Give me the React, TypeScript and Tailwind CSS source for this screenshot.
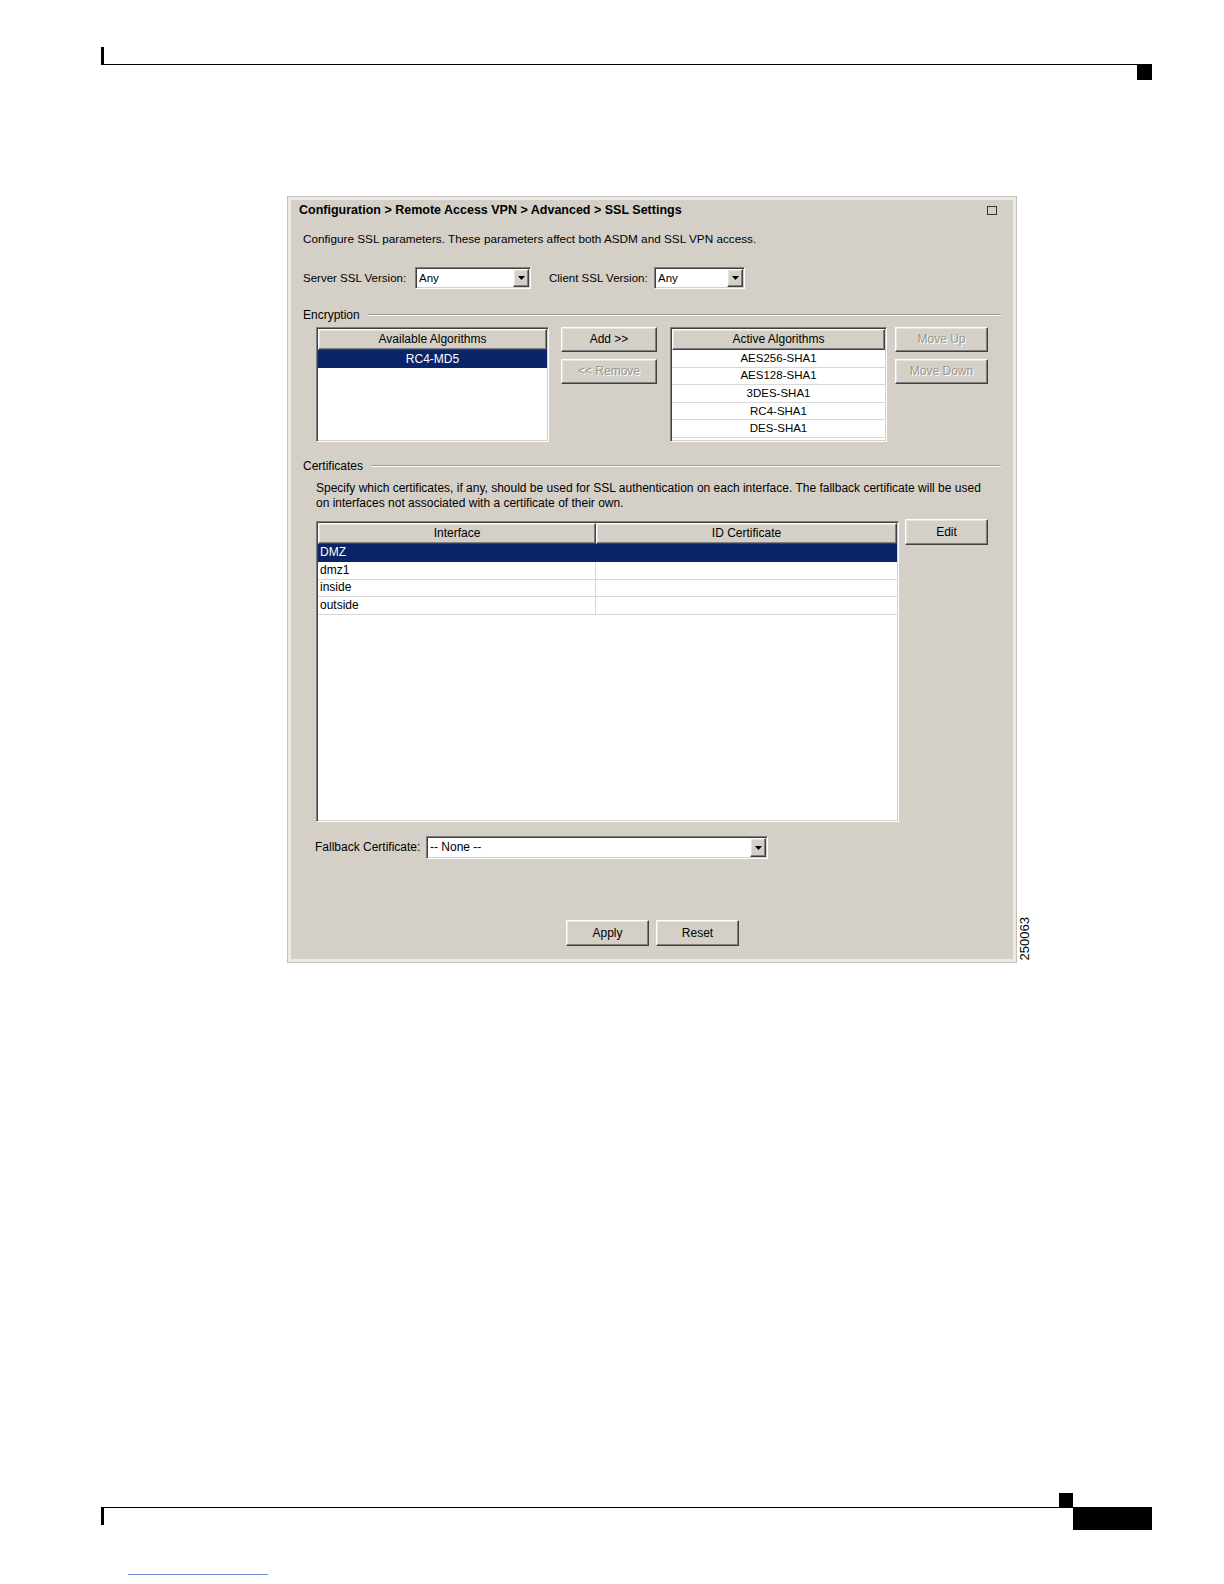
import React from "react";

const raised =
  "bg-[#d4d0c8] border border-t-white border-l-white border-r-[#404040] border-b-[#404040] shadow-[inset_-1px_-1px_0_#808080,inset_1px_1px_0_#e6e4de]";
const sunken =
  "bg-white border border-t-[#808080] border-l-[#808080] border-r-white border-b-white shadow-[inset_1px_1px_0_#404040,inset_-1px_-1px_0_#d4d0c8]";
const disabledText = "text-[#9a968e] [text-shadow:1px_1px_0_#ffffff]";

function Btn({ label, disabled, cls }: { label: string; disabled?: boolean; cls: string }) {
  return (
    <div className={`${raised} ${cls} flex items-center justify-center ${disabled ? disabledText : "text-black"}`}>
      {label}
    </div>
  );
}

function Arrow() {
  return (
    <svg width="7" height="4" viewBox="0 0 7 4">
      <path d="M0 0H7L3.5 4Z" fill="#000" />
    </svg>
  );
}

function Combo({ value, cls }: { value: string; cls: string }) {
  return (
    <div className={`${sunken} ${cls} flex items-stretch p-[1px]`}>
      <div className="flex-1 flex items-center pl-[2px]">{value}</div>
      <div className={`${raised} w-[16px] flex items-center justify-center`}>
        <Arrow />
      </div>
    </div>
  );
}

function GroupLabel({ label }: { label: string }) {
  return (
    <div className="h-[14px] flex items-center pl-[12px] pr-[12px]">
      <span>{label}</span>
      <div className="flex-1 ml-[8px] h-[2px] border-t border-t-[#a09d96] border-b border-b-white" />
    </div>
  );
}

const active = ["AES256-SHA1", "AES128-SHA1", "3DES-SHA1", "RC4-SHA1", "DES-SHA1"];
const ifaces = ["DMZ", "dmz1", "inside", "outside"];

export default function App() {
  return (
    <div className="w-[1224px] h-[1584px] overflow-hidden bg-white pt-[47px] font-['Liberation_Sans',Arial,sans-serif] text-black">
      {/* top page rule */}
      <div className="ml-[101px] w-[1051px] h-[18px] border-l-[3px] border-b border-black" />
      <div className="ml-[1137px] w-[15px] h-[15px] bg-black" />

      {/* figure */}
      <div className="mt-[117px] ml-[288px] flex items-end">
        <div className="w-[728px] h-[765px] border-[3px] border-[#eceae5] shadow-[0_0_0_1px_#c4c1b9] bg-[#d4d0c8] flex flex-col text-[12px] leading-[15px]">
          {/* title */}
          <div className="h-[20px] pl-[8px] pr-[16px] flex items-center justify-between">
            <span className="font-bold text-[12.5px]">Configuration &gt; Remote Access VPN &gt; Advanced &gt; SSL Settings</span>
            <div className="w-[10px] h-[9px] border border-[#333]" />
          </div>

          <div className="mt-[10px] pl-[12px] h-[16px] flex items-center text-[11.75px]">
            Configure SSL parameters. These parameters affect both ASDM and SSL VPN access.
          </div>

          <div className="mt-[21px] pl-[12px] h-[22px] flex items-center text-[11.5px]">
            <span className="w-[112px]">Server SSL Version:</span>
            <Combo value="Any" cls="w-[116px] h-[22px]" />
            <span className="ml-[18px] w-[105px]">Client SSL Version:</span>
            <Combo value="Any" cls="w-[91px] h-[22px]" />
          </div>

          <div className="mt-[19px]">
            <GroupLabel label="Encryption" />
          </div>

          <div className="mt-[5px] pl-[25px] flex items-start">
            <div className={`${sunken} w-[233px] h-[115px] p-[1px] flex flex-col`}>
              <div className={`${raised} h-[21px] flex items-center justify-center`}>Available Algorithms</div>
              <div className="h-[18px] bg-[#0a246a] text-white flex items-center justify-center">RC4-MD5</div>
            </div>
            <div className="ml-[12px] flex flex-col">
              <Btn label="Add >>" cls="w-[96px] h-[25px]" />
              <Btn label="<< Remove" disabled cls="mt-[7px] w-[96px] h-[25px]" />
            </div>
            <div className={`${sunken} ml-[13px] w-[217px] h-[115px] p-[1px] flex flex-col`}>
              <div className={`${raised} h-[21px] flex items-center justify-center`}>Active Algorithms</div>
              {active.map((a) => (
                <div key={a} className="h-[17.6px] border-b border-[#d8d8d8] flex items-center justify-center text-[11.5px]">
                  {a}
                </div>
              ))}
            </div>
            <div className="ml-[8px] flex flex-col">
              <Btn label="Move Up" disabled cls="w-[93px] h-[25px]" />
              <Btn label="Move Down" disabled cls="mt-[7px] w-[93px] h-[25px]" />
            </div>
          </div>

          <div className="mt-[17px]">
            <GroupLabel label="Certificates" />
          </div>

          <div className="mt-[8px] pl-[25px] whitespace-nowrap">
            Specify which certificates, if any, should be used for SSL authentication on each interface. The fallback certificate will be used
            <br />
            on interfaces not associated with a certificate of their own.
          </div>

          <div className="mt-[8px] pl-[25px] flex items-start">
            <div className={`${sunken} mt-[2px] w-[583px] h-[301px] p-[1px] flex flex-col`}>
              <div className="flex w-[579px]">
                <div className={`${raised} w-[278px] h-[21px] flex items-center justify-center`}>Interface</div>
                <div className={`${raised} w-[301px] h-[21px] flex items-center justify-center`}>ID Certificate</div>
              </div>
              {ifaces.map((n, i) => (
                <div
                  key={n}
                  className={`flex w-[579px] h-[17.8px] border-b ${i === 0 ? "bg-[#0a246a] text-white border-[#0a246a]" : "border-[#d8d8d8]"}`}
                >
                  <div className={`w-[278px] pl-[2px] flex items-center border-r ${i === 0 ? "border-[#0a246a]" : "border-[#d8d8d8]"}`}>{n}</div>
                  <div className="flex-1" />
                </div>
              ))}
            </div>
            <Btn label="Edit" cls="ml-[6px] w-[83px] h-[26px]" />
          </div>

          <div className="mt-[14px] pl-[24px] h-[23px] flex items-center">
            <span className="w-[111px]">Fallback Certificate:</span>
            <Combo value="-- None --" cls="w-[342px] h-[23px]" />
          </div>

          <div className="mt-[61px] pl-[275px] flex">
            <Btn label="Apply" cls="w-[83px] h-[26px]" />
            <Btn label="Reset" cls="ml-[7px] w-[83px] h-[26px]" />
          </div>
        </div>
        <div className="ml-[2px] mb-[2px] [writing-mode:vertical-rl] rotate-180 text-[13px] leading-none">250063</div>
      </div>

      {/* bottom page rule */}
      <div className="mt-[531px] ml-[1059px] w-[14px] h-[14px] bg-black" />
      <div className="ml-[101px] flex items-start">
        <div className="w-[972px] h-[18px] border-t border-l-[3px] border-black" />
        <div className="w-[79px] h-[23px] bg-black" />
      </div>
      <div className="mt-[44px] ml-[128px] w-[140px] h-px bg-[#6d8fd8]" />
    </div>
  );
}
